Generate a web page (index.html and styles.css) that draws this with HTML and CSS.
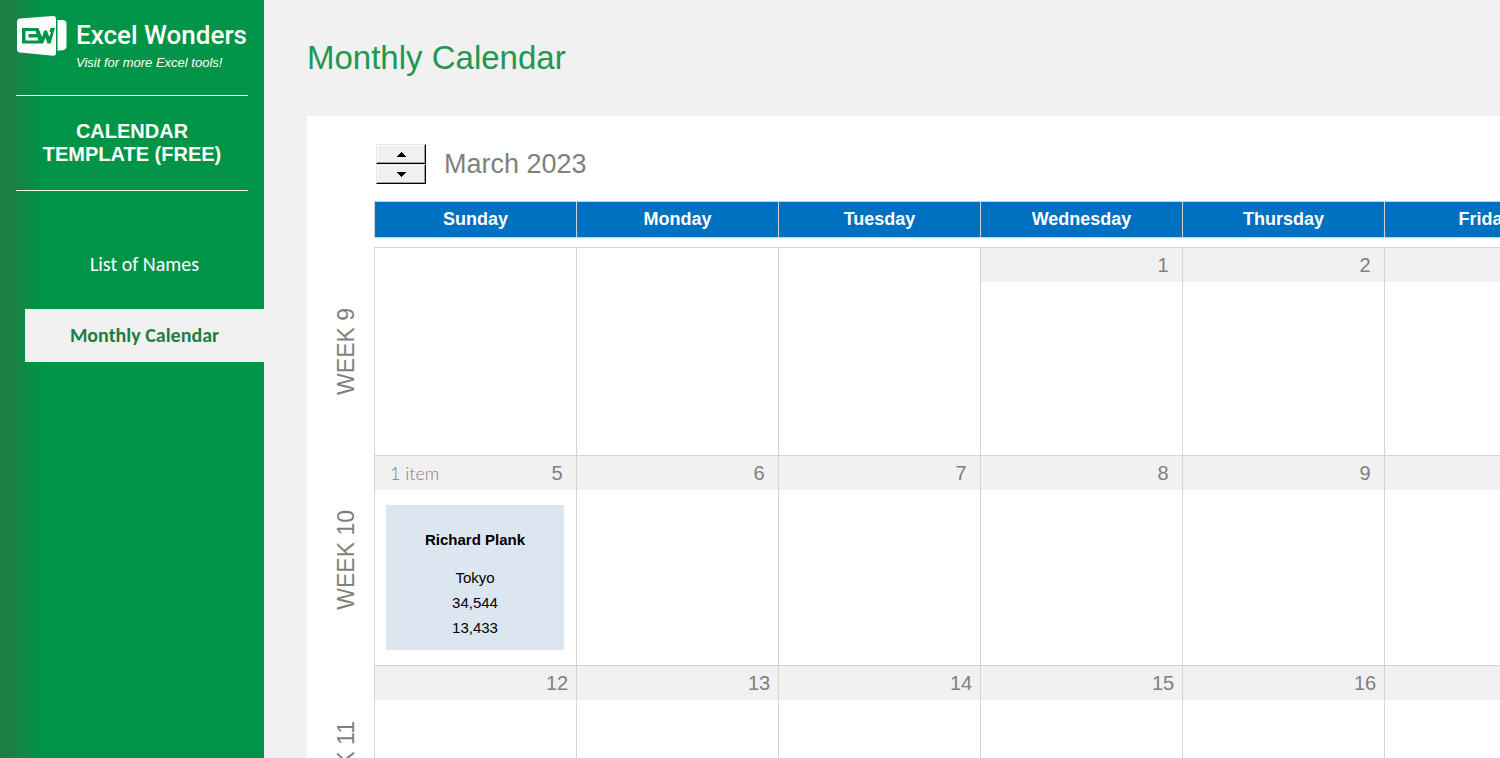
FILE: index.html
```html
<!DOCTYPE html>
<html lang="en">
<head>
    <meta charset="UTF-8">
    <meta name="viewport" content="width=device-width, initial-scale=1.0">
    <title>Monthly Calendar</title>
    <link rel="stylesheet" href="styles.css">
</head>
<body>
<div class="layout">

    <!-- Sidebar -->
    <aside class="sidebar">
        <a href="#" class="brand">
            <svg class="logo" width="52" height="42" viewBox="0 0 52 42" aria-hidden="true">
                <path fill="#fff" d="M4 3.6 L37 1 Q40 .9 40 4 V38 Q40 41 37 40.7 L4 37.6 Q1 37.2 1 34 V7 Q1 4 4 3.6Z"/>
                <path fill="#fff" d="M41.5 5 H46 Q50.5 5 50.5 9 V31 Q50.5 35 46 35.3 L41.5 35.7Z"/>
                <path fill="#009447" d="M6 13 H22.5 L26 22 L28.2 15.500 H31 L33.300 22 L35 17 H33.500 L34.500 13 H39 L34.500 28.500 H31.500 L29.500 22.500 L27 28.500 H6Z"/>
                <path fill="#fff" d="M9.500 16 H19.500 L20.500 19 H12.500 V22.500 H21.500 L22.500 25.500 H9.500Z"/>
            </svg>
            <span class="brand-text">
                <span class="brand-name">Excel Wonders</span>
                <span class="brand-note">Visit for more Excel tools!</span>
            </span>
        </a>
        <h2 class="product">CALENDAR<br>TEMPLATE (FREE)</h2>
        <nav class="menu">
            <a href="#">List of Names</a>
            <a href="#" class="active">Monthly Calendar</a>
        </nav>
    </aside>

    <!-- Main content -->
    <main class="content">
        <h1>Monthly Calendar</h1>

        <div class="sheet">
            <div class="month-bar">
                <div class="spinner">
                    <button type="button" aria-label="Next month"><svg width="9" height="5" viewBox="0 0 9 5" shape-rendering="crispEdges"><path d="M0 5 L4 0 H5 L9 5Z"/></svg></button>
                    <button type="button" aria-label="Previous month"><svg width="9" height="5" viewBox="0 0 9 5" shape-rendering="crispEdges"><path d="M0 0 H9 L5 5 H4Z"/></svg></button>
                </div>
                <span class="month">March 2023</span>
            </div>

            <table class="calendar">
                <colgroup>
                    <col class="col-week">
                    <col class="col-day" span="6">
                </colgroup>
                <thead>
                    <tr>
                        <td></td>
                        <th>Sunday</th>
                        <th>Monday</th>
                        <th>Tuesday</th>
                        <th>Wednesday</th>
                        <th>Thursday</th>
                        <th>Friday</th>
                    </tr>
                    <tr class="spacer"><td colspan="7"></td></tr>
                </thead>
                <tbody>
                    <tr>
                        <th class="week"><span>WEEK 9</span></th>
                        <td></td>
                        <td></td>
                        <td></td>
                        <td><div class="date"><span class="num">1</span></div></td>
                        <td><div class="date"><span class="num">2</span></div></td>
                        <td><div class="date"></div></td>
                    </tr>
                    <tr>
                        <th class="week"><span>WEEK 10</span></th>
                        <td>
                            <div class="date"><span class="items">1 item</span><span class="num">5</span></div>
                            <div class="event">
                                <strong>Richard Plank</strong>
                                <span>Tokyo</span>
                                <span>34,544</span>
                                <span>13,433</span>
                            </div>
                        </td>
                        <td><div class="date"><span class="num">6</span></div></td>
                        <td><div class="date"><span class="num">7</span></div></td>
                        <td><div class="date"><span class="num">8</span></div></td>
                        <td><div class="date"><span class="num">9</span></div></td>
                        <td><div class="date"></div></td>
                    </tr>
                    <tr>
                        <th class="week"><span>WEEK 11</span></th>
                        <td><div class="date"><span class="num">12</span></div></td>
                        <td><div class="date"><span class="num">13</span></div></td>
                        <td><div class="date"><span class="num">14</span></div></td>
                        <td><div class="date"><span class="num">15</span></div></td>
                        <td><div class="date"><span class="num">16</span></div></td>
                        <td><div class="date"></div></td>
                    </tr>
                </tbody>
            </table>
        </div>
    </main>

</div>
</body>
</html>
```
FILE: styles.css
```css
* {
    box-sizing: border-box;
}
body {
    margin: 0;
    font-family: "Liberation Sans", Arial, sans-serif;
    background-color: #f1f1f1;
}
.layout {
    display: flex;
    height: 100vh;
    overflow: hidden;
}

/* Sidebar */
.sidebar {
    flex: 0 0 264px;
    min-width: 0;
    color: #fff;
    background: linear-gradient(to right, #1f7d42 0, #1f7d42 6px, #009447 42px);
}
.sidebar a {
    color: #fff;
    text-decoration: none;
}
.brand {
    display: flex;
    gap: 8px;
    height: 96px;
    margin: 0 16px;
    padding-top: 15px;
    border-bottom: 1px solid #fff;
}
.logo {
    flex: none;
}
.brand-text {
    display: flex;
    flex-direction: column;
    white-space: nowrap;
}
.brand-name {
    font-family: Roboto, sans-serif;
    font-size: 26px;
    font-weight: 500;
    line-height: 40px;
}
.brand-note {
    font-size: 13px;
    font-style: italic;
    line-height: 16px;
}
.product {
    margin: 0 16px;
    padding: 24px 0;
    border-bottom: 1px solid #fff;
    font-size: 20px;
    line-height: 23px;
    text-align: center;
}
.menu {
    display: flex;
    flex-direction: column;
    gap: 18px;
    margin: 47px 0 0 25px;
    font-family: Carlito, Lato, sans-serif;
    font-size: 20px;
    line-height: 53px;
    text-align: center;
}
.menu a.active {
    background-color: #f1f1f1;
    color: #1f7d42;
    font-weight: bold;
}

/* Main content */
.content {
    flex: 1;
    min-width: 0;
    padding-left: 43px;
}
h1 {
    margin: 0;
    padding: 38px 0;
    color: #22974e;
    font-size: 33px;
    font-weight: normal;
    line-height: 40px;
}
.sheet {
    min-height: 100%;
    padding-top: 28px;
    background-color: #fff;
}
.month-bar {
    display: flex;
    align-items: center;
    gap: 18px;
    margin: 0 0 17px 69px;
}
.spinner {
    display: flex;
    flex-direction: column;
    width: 50px;
}
.spinner button {
    display: flex;
    align-items: center;
    justify-content: center;
    height: 20px;
    padding: 0;
    border: 1px solid #e8e8e8;
    border-right: 1px solid #000;
    border-bottom: 1px solid #000;
    background-color: #f0f0f0;
    box-shadow: inset -1px -1px 0 #a0a0a0, inset 1px 1px 0 #fff;
}
.month {
    color: #7f7f7f;
    font-size: 27px;
    line-height: 40px;
}

/* Calendar */
.calendar {
    width: 1279px;
    table-layout: fixed;
    border-spacing: 0;
}
.col-week {
    width: 67px;
}
.col-day {
    width: 202px;
}
.calendar td, .calendar th {
    padding: 0;
}
thead th {
    height: 37px;
    border: 1px solid #d4d4d4;
    border-right: none;
    background-color: #0070c0;
    color: #fff;
    font-size: 18px;
}
.spacer td {
    height: 9px;
}
tbody td {
    height: 210px;
    border-top: 1px solid #d4d4d4;
    border-left: 1px solid #d4d4d4;
    vertical-align: top;
}
tbody tr:first-child td {
    height: 208px;
}
.calendar .week {
    padding-left: 12px;
    color: #7f7f7f;
    font-size: 23px;
    font-weight: normal;
}
.week span {
    display: inline-block;
    writing-mode: vertical-rl;
    transform: rotate(180deg);
    vertical-align: middle;
}
.date {
    display: flex;
    align-items: center;
    height: 34px;
    padding-left: 15px;
    background-color: #f1f1f1;
    color: #7f7f7f;
}
.items {
    font-family: "Century Gothic", Lato, sans-serif;
    font-size: 18px;
    font-weight: 300;
}
.num {
    width: 38px;
    margin-left: auto;
    font-size: 20px;
    text-align: center;
}
.event {
    display: flex;
    flex-direction: column;
    margin: 15px 12px 0 11px;
    padding: 22px 0 10px;
    background-color: #dce6f0;
    font-size: 15px;
    line-height: 25px;
    text-align: center;
}
.event strong {
    margin-bottom: 13px;
}
```
